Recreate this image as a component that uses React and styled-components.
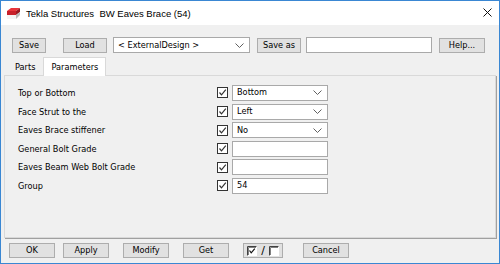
import styled, { createGlobalStyle } from 'styled-components'

const GlobalStyle = createGlobalStyle`
  html, body {
    margin: 0;
    padding: 0;
    background: #ffffff;
  }
  * {
    box-sizing: border-box;
  }
`

const rows = [
  { label: 'Top or Bottom', kind: 'select', value: 'Bottom', h: 19 },
  { label: 'Face Strut to the', kind: 'select', value: 'Left', h: 19 },
  { label: 'Eaves Brace stiffener', kind: 'select', value: 'No', h: 18 },
  { label: 'General Bolt Grade', kind: 'input', value: '', h: 19 },
  { label: 'Eaves Beam Web Bolt Grade', kind: 'input', value: '', h: 18 },
  { label: 'Group', kind: 'input', value: '54', h: 19 },
]

function Chevron() {
  return (
    <svg width='9' height='5' viewBox='0 0 9 5'>
      <polyline points='0.5,0.5 4.5,4.5 8.5,0.5' fill='none' stroke='#606060' strokeWidth='1' />
    </svg>
  )
}

function CheckBox({ checked = true, size = 11 }) {
  return (
    <svg width={size} height={size} viewBox='0 0 11 11'>
      <rect x='0.5' y='0.5' width='10' height='10' fill='#ffffff' stroke='#333333' />
      {checked && <polyline points='2.5,5.5 4.5,7.8 8.8,2.6' fill='none' stroke='#333333' strokeWidth='1.2' />}
    </svg>
  )
}

function SunkenBox({ checked }) {
  return (
    <svg width='10' height='10' viewBox='0 0 10 10'>
      <rect x='0' y='0' width='10' height='10' fill='#ffffff' />
      <polyline points='0.5,9.5 0.5,0.5 9.5,0.5' fill='none' stroke='#404040' />
      <polyline points='1.5,9 1.5,1.5 9,1.5' fill='none' stroke='#808080' />
      {checked && <polyline points='2.5,4.5 4.2,6.8 7.8,2.6' fill='none' stroke='#111111' strokeWidth='1.2' />}
    </svg>
  )
}

function TeklaIcon() {
  return (
    <svg width='13' height='11' viewBox='0 0 13 11'>
      <polygon points='0,3 4,0 13,0 9,3' fill='#e8343a' />
      <polygon points='0,3 9,3 9,7 0,7' fill='#c8202a' />
      <polygon points='9,3 13,0 13,4 9,7' fill='#9a1820' />
      <polygon points='0,7 9,7 9,11 0,11' fill='#f4f4f4' />
      <polygon points='9,7 13,4 13,7 9,11' fill='#b9b9b9' />
    </svg>
  )
}

export default function App() {
  return (
    <>
      <GlobalStyle />
      <Window>
        <TitleBar>
          <TeklaIcon />
          <TitleText>Tekla Structures&nbsp;&nbsp;BW Eaves Brace (54)</TitleText>
          <CloseGlyph>
            <svg width='9' height='9' viewBox='0 0 9 9'>
              <path d='M0.5 0.5 L8.5 8.5 M8.5 0.5 L0.5 8.5' stroke='#111' strokeWidth='1' />
            </svg>
          </CloseGlyph>
        </TitleBar>
        <Body>
          <Toolbar>
            <Button $w={34}>Save</Button>
            <Button $w={44} $ml={17}>Load</Button>
            <Select $w={137} $ml={6}>
              <span>&lt; ExternalDesign &gt;</span>
              <Chevron />
            </Select>
            <Button $w={44} $ml={7}>Save as</Button>
            <TextBox $w={126} $ml={5} />
            <Button $w={46} $ml={7}>Help...</Button>
          </Toolbar>
          <Tabs>
            <Tab>Parts</Tab>
            <Tab $active>Parameters</Tab>
          </Tabs>
          <Panel>
            {rows.map((r) => (
              <Row key={r.label} $h={r.h}>
                <Label>{r.label}</Label>
                <CheckBox />
                {r.kind === 'select' ? (
                  <Select $w={96} $ml={4}>
                    <span>{r.value}</span>
                    <Chevron />
                  </Select>
                ) : (
                  <TextBox $w={96} $ml={4}>{r.value}</TextBox>
                )}
              </Row>
            ))}
          </Panel>
          <Footer>
            <Button $w={46}>OK</Button>
            <Button $w={46} $ml={8}>Apply</Button>
            <Button $w={46} $ml={14}>Modify</Button>
            <Button $w={46} $ml={14}>Get</Button>
            <Button $w={40} $ml={14}>
              <ToggleGlyphs>
                <SunkenBox checked />
                <span>/</span>
                <SunkenBox />
              </ToggleGlyphs>
            </Button>
            <Button $w={46} $ml={20}>Cancel</Button>
          </Footer>
        </Body>
      </Window>
    </>
  )
}

const Window = styled.div`
  width: 500px;
  height: 264px;
  border: 1px solid #3a87d3;
  background: #f0f0f0;
  display: flex;
  flex-direction: column;
  font-family: 'DejaVu Sans', Verdana, sans-serif;
  font-size: 8.2px;
  color: #000;
  overflow: hidden;
`

const TitleBar = styled.div`
  height: 24px;
  flex: 0 0 24px;
  background: #ffffff;
  display: flex;
  align-items: center;
  padding: 0 0 0 6px;
  svg {
    flex: 0 0 auto;
  }
`

const TitleText = styled.span`
  margin-left: 6px;
  font-family: 'Liberation Sans', Arial, sans-serif;
  font-size: 9.5px;
  color: #000;
  flex: 1;
  padding-top: 1px;
`

const CloseGlyph = styled.span`
  display: flex;
  align-items: center;
  margin-right: 7px;
  margin-top: -1px;
`

const Body = styled.div`
  flex: 1;
  display: flex;
  flex-direction: column;
  padding: 12px 2px 0 2px;
`

const Toolbar = styled.div`
  display: flex;
  align-items: center;
  height: 16px;
  padding-left: 9px;
`

const Button = styled.div`
  width: ${(p) => p.$w}px;
  margin-left: ${(p) => p.$ml || 0}px;
  height: 15px;
  flex: 0 0 auto;
  background: #e1e1e1;
  border: 1px solid #adadad;
  display: flex;
  align-items: center;
  justify-content: center;
  line-height: 1;
`

const Select = styled.div`
  width: ${(p) => p.$w}px;
  margin-left: ${(p) => p.$ml || 0}px;
  height: 16px;
  flex: 0 0 auto;
  background: #ffffff;
  border: 1px solid #a9a9a9;
  display: flex;
  align-items: center;
  justify-content: space-between;
  padding: 0 5px 0 4px;
  line-height: 1;
`

const TextBox = styled.div`
  width: ${(p) => p.$w}px;
  margin-left: ${(p) => p.$ml || 0}px;
  height: 16px;
  flex: 0 0 auto;
  background: #ffffff;
  border: 1px solid #a9a9a9;
  display: flex;
  align-items: center;
  padding: 0 4px;
  line-height: 1;
`

const Tabs = styled.div`
  display: flex;
  align-items: flex-end;
  height: 18px;
  margin-top: 4px;
  padding-left: 4px;
  position: relative;
  z-index: 1;
`

const Tab = styled.div`
  height: ${(p) => (p.$active ? 19 : 16)}px;
  padding: 0 7px;
  margin-bottom: ${(p) => (p.$active ? -1 : 0)}px;
  background: ${(p) => (p.$active ? '#ffffff' : '#f0f0f0')};
  border: 1px solid ${(p) => (p.$active ? '#d9d9d9' : 'transparent')};
  border-bottom: ${(p) => (p.$active ? 'none' : '1px solid transparent')};
  display: flex;
  align-items: center;
  line-height: 1;
`

const Panel = styled.div`
  height: 163px;
  margin: 0 1px;
  background: #f0f0f0;
  border: 1px solid #d9d9d9;
  box-shadow: 1px 1px 0 #a0a0a0;
  padding: 7px 0 0 13px;
  display: flex;
  flex-direction: column;
`

const Row = styled.div`
  display: flex;
  align-items: center;
  height: ${(p) => p.$h}px;
  svg {
    flex: 0 0 auto;
  }
`

const Label = styled.span`
  width: 199px;
  flex: 0 0 199px;
`

const Footer = styled.div`
  display: flex;
  align-items: center;
  margin-top: 5px;
  padding-left: 6px;
`

const ToggleGlyphs = styled.span`
  display: flex;
  align-items: center;
  gap: 4px;
  font-size: 11px;
  svg {
    display: block;
  }
`
